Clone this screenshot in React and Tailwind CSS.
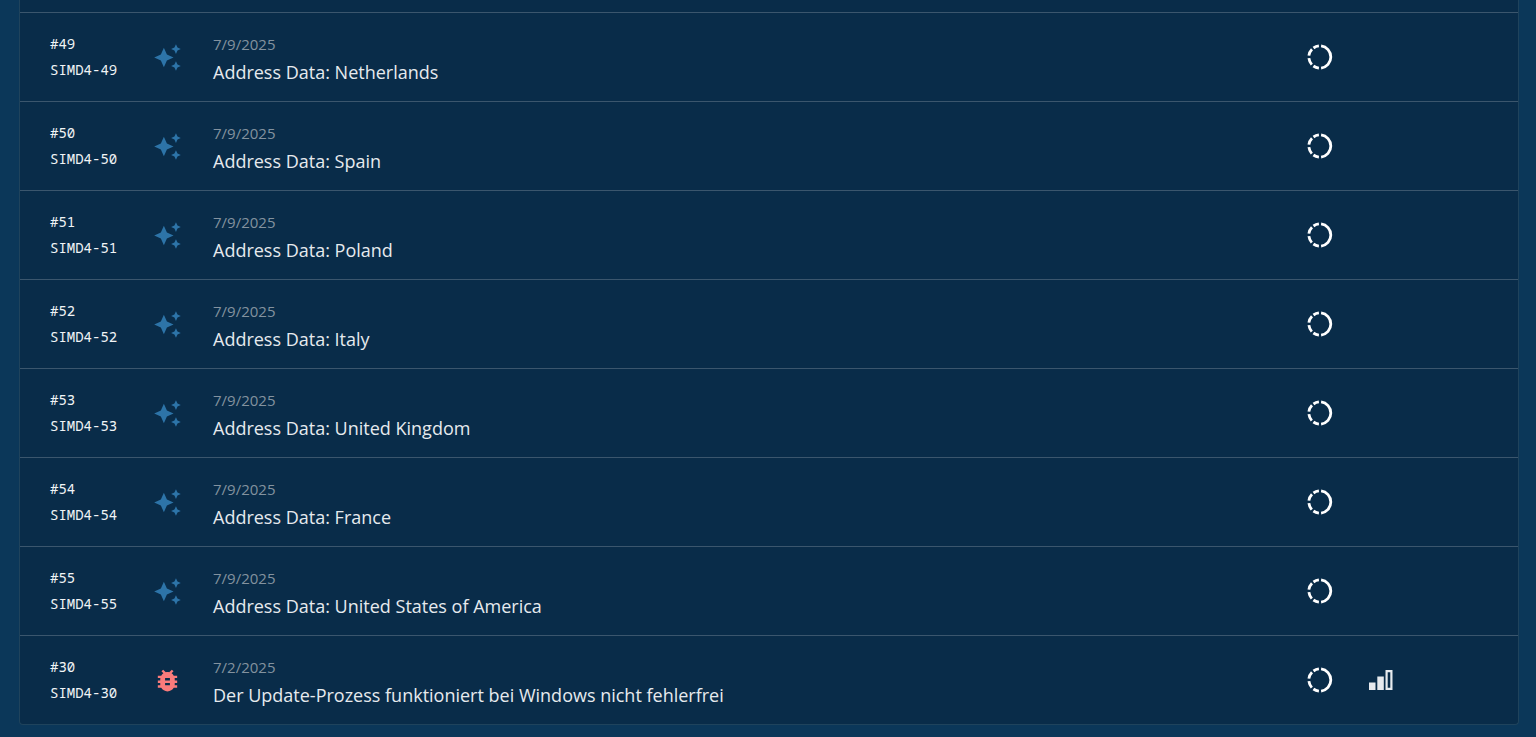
import React from "react";
import { MdAutoAwesome, MdBugReport } from "react-icons/md";

const issues = [
  { id: 49, date: "7/9/2025", title: "Address Data: Netherlands", type: "feature" },
  { id: 50, date: "7/9/2025", title: "Address Data: Spain", type: "feature" },
  { id: 51, date: "7/9/2025", title: "Address Data: Poland", type: "feature" },
  { id: 52, date: "7/9/2025", title: "Address Data: Italy", type: "feature" },
  { id: 53, date: "7/9/2025", title: "Address Data: United Kingdom", type: "feature" },
  { id: 54, date: "7/9/2025", title: "Address Data: France", type: "feature" },
  { id: 55, date: "7/9/2025", title: "Address Data: United States of America", type: "feature" },
  {
    id: 30,
    date: "7/2/2025",
    title: "Der Update-Prozess funktioniert bei Windows nicht fehlerfrei",
    type: "bug",
    priority: true,
  },
];

function StatusIcon() {
  return (
    <svg viewBox="0 0 28 28" className="mx-auto block size-7" fill="none" stroke="#ffffff" strokeWidth="2.8" aria-label="Open">
      <path d="M15.1 2.9A11.2 11.2 0 0 1 15.1 25.1" />
      <path d="M12.9 2.9A11.2 11.2 0 0 0 7.5 5" />
      <path d="M6 6.3A11.2 11.2 0 0 0 2.9 12.6" />
      <path d="M2.9 15.2A11.2 11.2 0 0 0 5.8 21.6" />
      <path d="M7.4 23A11.2 11.2 0 0 0 12.9 25.1" />
    </svg>
  );
}

function PriorityIcon() {
  return (
    <svg viewBox="0 0 24 20" className="mx-auto block h-5 w-6" fill="#e6eaee" aria-label="Medium priority">
      <path d="M0 12.5h6.5V20H0z" />
      <path d="M8.3 6.5h6.5V20H8.3z" />
      <path fillRule="evenodd" d="M16.5 0h7v20h-7zM18.7 2.2v15.6h2.6V2.2z" />
    </svg>
  );
}

function IssueRow({ issue }) {
  return (
    <tr className="h-[89px] *:border-t *:border-[#3b566d]">
      <td className="pl-[30px] font-['Noto_Sans_Mono','DejaVu_Sans_Mono',monospace] text-sm leading-[26px] text-[#f1f4f6]">
        <div>#{issue.id}</div>
        <div>SIMD4-{issue.id}</div>
      </td>
      <td>
        {issue.type === "bug" ? (
          <MdBugReport className="mx-auto block size-[29px] text-[#fa7b7b]" aria-label="Bug" />
        ) : (
          <MdAutoAwesome className="mx-auto block size-[29px] text-[#2d74a8]" aria-label="Feature" />
        )}
      </td>
      <td className="pt-px pl-[17px]">
        <div className="text-[15px] leading-7 text-[#83929f]">{issue.date}</div>
        <div className="text-lg leading-7 text-[#e6eaee]">
          <a href={`#SIMD4-${issue.id}`}>{issue.title}</a>
        </div>
      </td>
      <td>
        <StatusIcon />
      </td>
      <td>{issue.priority && <PriorityIcon />}</td>
      <td></td>
    </tr>
  );
}

export default function App() {
  return (
    <div className="min-h-screen bg-[#0b3759] pr-[17px] pb-3 pl-[19px] font-['Open_Sans','Noto_Sans',sans-serif]">
      <main className="rounded-b-[4px] border-x border-b border-[#1f435c] bg-[#092c49] pt-3">
        <table className="w-full table-fixed border-separate border-spacing-0 text-left">
          <colgroup>
            <col className="w-[119px]" />
            <col className="w-[57px]" />
            <col />
            <col className="w-[61px]" />
            <col className="w-[61px]" />
            <col className="w-[107px]" />
          </colgroup>
          <tbody>
            {issues.map((issue) => (
              <IssueRow key={issue.id} issue={issue} />
            ))}
          </tbody>
        </table>
      </main>
    </div>
  );
}
